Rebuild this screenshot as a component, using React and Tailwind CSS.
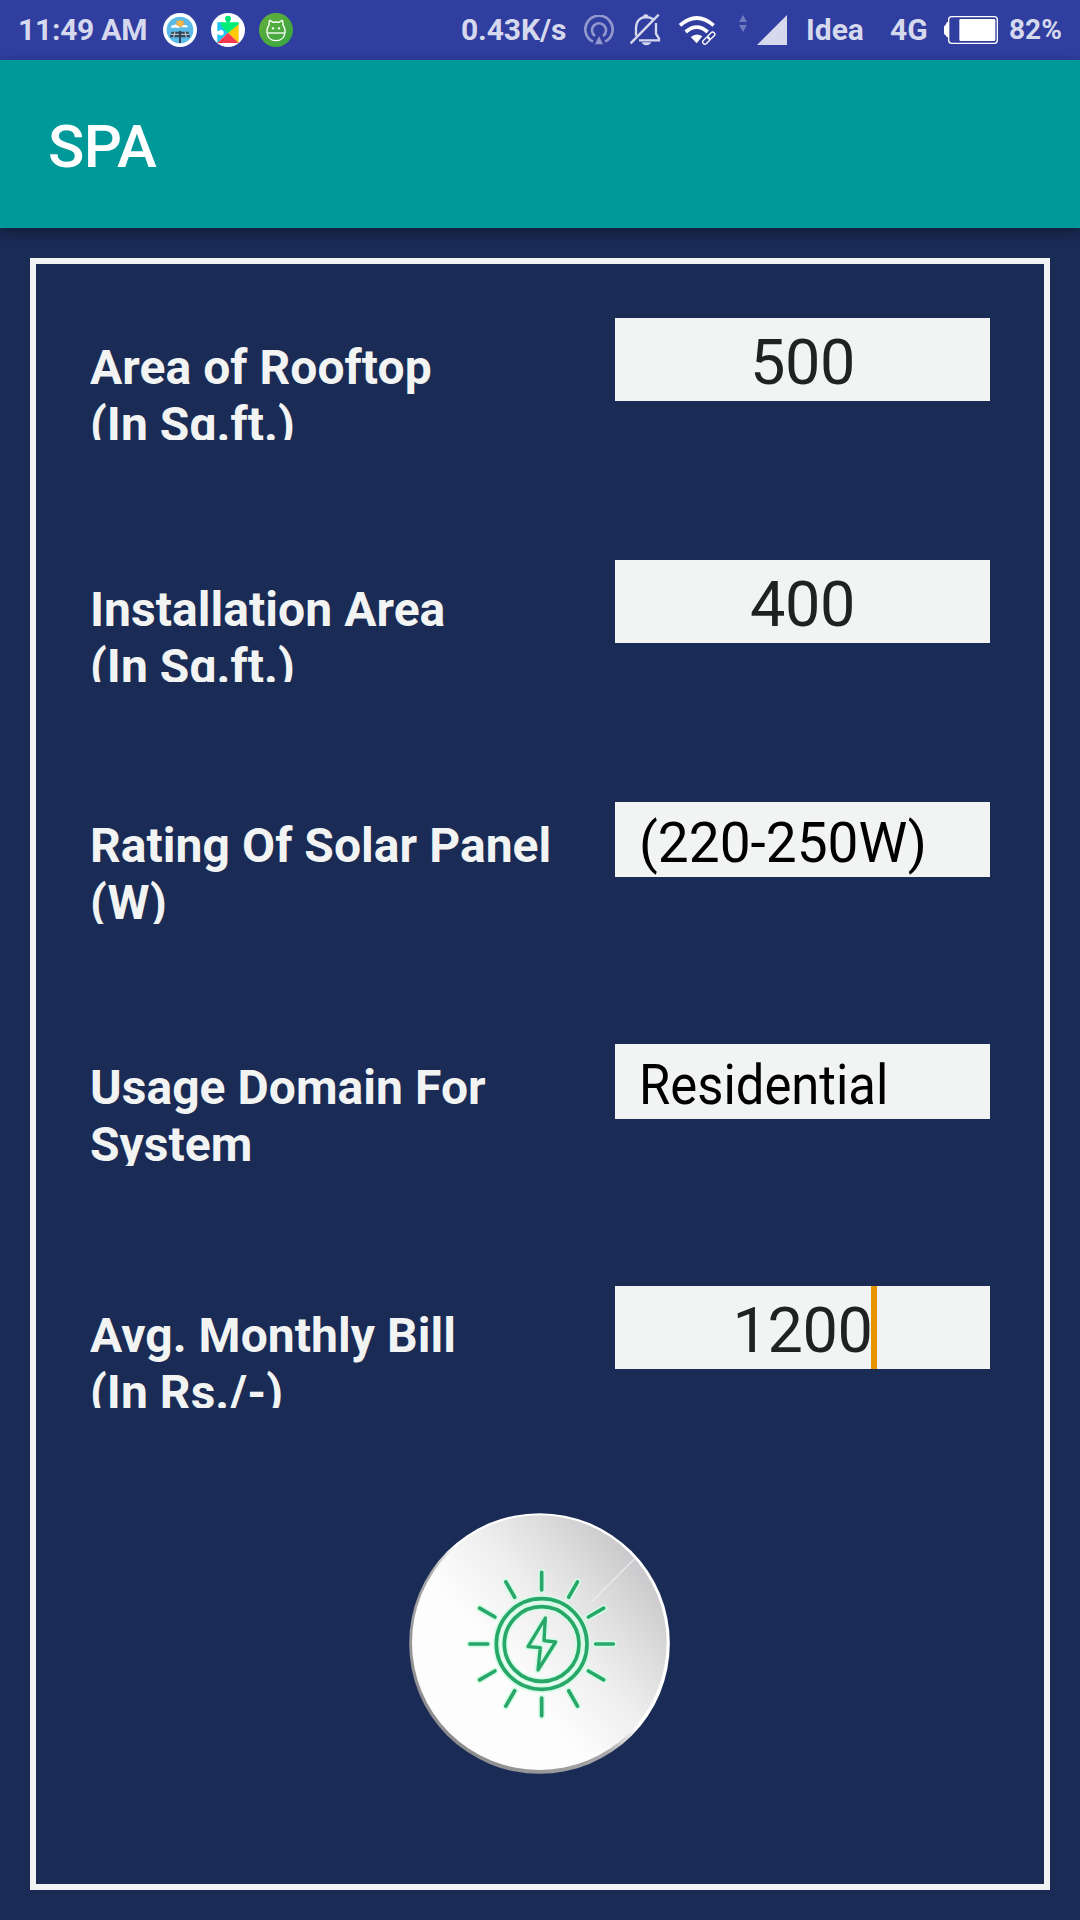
const FIELDS = [
  { lines: ["Area of Rooftop", "(In Sq.ft.)"], value: "500", kind: "input" },
  { lines: ["Installation Area", "(In Sq.ft.)"], value: "400", kind: "input" },
  { lines: ["Rating Of Solar Panel", "(W)"], value: "(220-250W)", kind: "select" },
  { lines: ["Usage Domain For", "System"], value: "Residential", kind: "select", narrow: true },
  { lines: ["Avg. Monthly Bill", "(In Rs./-)"], value: "1200", kind: "input", focused: true },
];

const RAYS = Array.from({ length: 12 }, (_, i) => i * 30);

function SolarAppIcon() {
  return (
    <svg className="h-[34px] w-[34px] shrink-0" viewBox="0 0 102 102">
      <circle cx="51" cy="51" r="51" fill="#fff" />
      <circle cx="51" cy="51" r="40" fill="#5bbbe6" />
      <path d="M51 20 L55 24 L62 22 L61 29 L66 33 L60 37 L58 43 L51 41 L44 43 L42 37 L37 33 L42 29 L40 22 L47 24Z" fill="#f5a63c" />
      <circle cx="51" cy="31" r="7" fill="#f9bd4f" />
      <path d="M24 43 Q24 36 32 37 Q38 31 44 38 Q50 38 51 44 H24Z" fill="#fff" />
      <path d="M55 43 Q57 36 64 37 Q72 33 75 43Z" fill="#fff" />
      <path d="M26 56 H76 L82 73 H20Z" fill="#34465a" />
      <path d="M23 64 H79 M36 56 L32 73 M66 56 L70 73" stroke="#c9d6dd" strokeWidth="3" />
      <path d="M51 54 V90" stroke="#2f4152" strokeWidth="6" />
    </svg>
  );
}

function PlayServicesIcon() {
  return (
    <svg className="h-[34px] w-[34px] shrink-0" viewBox="0 0 102 102">
      <circle cx="51" cy="51" r="51" fill="#fff" />
      <circle cx="51" cy="17" r="9" fill="#00e676" />
      <path d="M46 20 H56 V30 H46Z" fill="#00e676" />
      <path d="M19 28 H34 L51 59 L19 90Z" fill="#1fc4f4" />
      <path d="M83 28 V90 L51 59Z" fill="#ffca0a" />
      <path d="M30 28 H83 V34 L51 60 L30 38Z" fill="#00ee76" />
      <path d="M19 90 L51 59 L83 90Z" fill="#f8384f" />
      <circle cx="30" cy="59" r="8" fill="#fff" />
      <path d="M17 54 H30 V64 H17Z" fill="#fff" />
    </svg>
  );
}

function AndroidFaceIcon() {
  return (
    <svg className="h-[34px] w-[34px] shrink-0" viewBox="0 0 102 102">
      <defs>
        <linearGradient id="android-bg" x1="0" y1="0" x2="1" y2="1">
          <stop offset="0" stopColor="#64b03a" />
          <stop offset="1" stopColor="#36a541" />
        </linearGradient>
      </defs>
      <circle cx="51" cy="51" r="51" fill="url(#android-bg)" />
      <path d="M30 36 Q30 26 32 22 L43 28 Q51 26 59 28 L70 22 Q72 26 72 36 Q78 44 78 54 C78 74 66 83 51 83 C36 83 24 74 24 54 Q24 44 30 36Z" fill="none" stroke="#fff" strokeWidth="4" strokeLinejoin="round" />
      <path d="M25 60 H77" stroke="#fff" strokeWidth="4" />
      <circle cx="42" cy="46" r="3.5" fill="#fff" />
      <circle cx="60" cy="46" r="3.5" fill="#fff" />
    </svg>
  );
}

function HotspotIcon() {
  return (
    <svg className="h-[30px] w-[30px] shrink-0" viewBox="0 0 90 90" fill="none" stroke="#9297cd" strokeWidth="8">
      <path d="M27 80 A41 41 0 1 1 63 80" />
      <path d="M33 63 A21 21 0 1 1 57 63" />
      <path d="M45 63 L57 88 H33Z" fill="#9297cd" stroke="none" />
    </svg>
  );
}

function BellOffIcon() {
  return (
    <svg className="ml-4 h-[32px] w-[31px] shrink-0" viewBox="570 41 93 96" fill="none" stroke="#d6d9ee" strokeWidth="7">
      <path d="M588 106 V84 C588 64 599 51 618 50 C627 50 634 53 640 57" />
      <path d="M612 48 Q617 42 623 48" />
      <path d="M648 68 V100 L657 115 V120 H597" />
      <path d="M572 129 L656 43" />
      <path d="M605 126 H634 Q629 135 619 135 Q609 135 605 126Z" fill="#d6d9ee" stroke="none" />
    </svg>
  );
}

function WifiLinkIcon() {
  return (
    <svg className="ml-[18px] h-[31px] w-[37px] shrink-0" viewBox="718 45 111 93" fill="none" stroke="#fff">
      <path d="M721 76 Q771 32 822 76" strokeWidth="11" />
      <path d="M738 96 Q771 67 804 96" strokeWidth="11" />
      <path d="M753 111 Q771 97 788 109 L771 130Z" fill="#fff" stroke="none" />
      <g strokeWidth="4" transform="rotate(-45 807 114)">
        <rect x="783" y="108" width="26" height="13" rx="6.5" stroke="#303e9f" strokeWidth="11" />
        <rect x="805" y="108" width="26" height="13" rx="6.5" stroke="#303e9f" strokeWidth="11" />
        <rect x="784" y="108" width="25" height="13" rx="6.5" />
        <rect x="805" y="108" width="25" height="13" rx="6.5" />
      </g>
    </svg>
  );
}

function StatusBar() {
  return (
    <div className="flex h-[60px] items-center bg-[#303e9f] pl-[18px] text-[30px] leading-[60px] font-bold whitespace-nowrap text-[#d6d9ee]">
      <span className="w-[145px] shrink-0 tracking-[-0.25px]">11:49 AM</span>
      <div className="flex shrink-0 gap-[14px]">
        <SolarAppIcon />
        <PlayServicesIcon />
        <AndroidFaceIcon />
      </div>
      <span className="ml-[168px] w-[123px] shrink-0 tracking-[-0.1px]">0.43K/s</span>
      <HotspotIcon />
      <BellOffIcon />
      <WifiLinkIcon />
      <svg className="mb-[14px] ml-[23px] h-[17px] w-[8px] shrink-0" viewBox="0 0 24 51" fill="#737bc0">
        <path d="M12 0 L24 21 H0Z M0 30 H24 L12 51Z" />
      </svg>
      <svg className="ml-[10px] h-[30px] w-[30px] shrink-0" viewBox="0 0 30 30" fill="#d6d9ee">
        <path d="M30 0 V30 H0Z" />
      </svg>
      <span className="ml-[19px] w-[84px] shrink-0">Idea</span>
      <span className="w-[54px] shrink-0">4G</span>
      <svg className="h-[28px] w-[54px] shrink-0" viewBox="672 48 162 84">
        <path d="M686 66 H681 L677 74 Q672 76 672 82 V98 Q672 104 677 106 L681 112 H686Z" fill="#fff" />
        <rect x="686" y="50" width="146" height="80" rx="9" fill="none" stroke="#fff" strokeWidth="4" />
        <rect x="718" y="57" width="108" height="66" rx="4" fill="#fff" />
      </svg>
      <span className="ml-[11px] shrink-0 text-[28px]">82%</span>
    </div>
  );
}

function ValueBox({ field }) {
  if (field.kind === "select") {
    return (
      <div className="h-[75px] w-[375px] bg-[#f2f4f3] pl-6 text-[55px] leading-[82px] whitespace-nowrap text-black">
        <span className={field.narrow ? "inline-block origin-left scale-x-[0.923]" : "inline-block"}>{field.value}</span>
      </div>
    );
  }
  return (
    <div className="flex h-[83px] w-[375px] justify-center bg-[#f2f4f3] text-[63px] leading-[89px] tracking-[-0.4px] text-[#1f2220]">
      <span>{field.value}</span>
      {field.focused && <span className="-mr-[4px] -ml-[2px] h-[83px] w-[6px] shrink-0 bg-[#e69500]" />}
    </div>
  );
}

function FieldRow({ field }) {
  return (
    <div className="flex h-[122px] items-start justify-between overflow-hidden">
      <div className={field.kind === "select" ? "pt-[15px]" : "pt-[21px]"}>
        {field.lines.map((line) => (
          <div key={line} className="text-[48px] leading-[57px] font-bold tracking-[0.05px] whitespace-nowrap text-[#f2f4f3]">
            {line}
          </div>
        ))}
      </div>
      <ValueBox field={field} />
    </div>
  );
}

function SolarButton() {
  return (
    <svg className="h-[261px] w-[261px]" viewBox="27 39 783 783">
      <defs>
        <linearGradient id="disc" x1="0.92" y1="0.24" x2="0.42" y2="0.66">
          <stop offset="0" stopColor="#cbcbcd" />
          <stop offset="0.3" stopColor="#dededf" />
          <stop offset="0.6" stopColor="#efeff0" />
          <stop offset="1" stopColor="#fdfdfd" />
        </linearGradient>
        <linearGradient id="rim" x1="0.15" y1="0.85" x2="0.8" y2="0.2">
          <stop offset="0" stopColor="#8d8d90" />
          <stop offset="0.42" stopColor="#a9a9ab" />
          <stop offset="0.58" stopColor="#ffffff" />
          <stop offset="1" stopColor="#ffffff" />
        </linearGradient>
      </defs>
      <circle cx="418.5" cy="430.5" r="391" fill="url(#rim)" />
      <circle cx="418" cy="428" r="382" fill="url(#disc)" />
      <path d="M575 305 L702 178" stroke="#ececee" strokeWidth="4" />
      {[
        { color: "#d5fbe6", extra: 10 },
        { color: "#27a869", extra: 0 },
      ].map(({ color, extra }) => (
        <g key={color} fill="none" stroke={color} strokeLinecap="round" strokeLinejoin="round">
          <circle cx="425" cy="432" r="136" strokeWidth={11 + extra} />
          <circle cx="425" cy="432" r="112" strokeWidth={11 + extra} />
          {RAYS.map((angle) => (
            <path key={angle} d="M425 217 V270" strokeWidth={11 + extra} transform={`rotate(${angle} 425 432)`} />
          ))}
          <path d="M436 354 L384 440 L421 443 L414 510 L467 426 L432 422Z" strokeWidth={10 + extra} />
        </g>
      ))}
    </svg>
  );
}

export default function App() {
  return (
    <div className="flex h-[1920px] w-[1080px] flex-col overflow-hidden bg-[#1a2b55] font-['Roboto',sans-serif]">
      <StatusBar />
      <header className="h-[168px] shrink-0 bg-[#009999] pl-12 shadow-[0_4px_12px_rgba(0,0,0,0.4)]">
        <h1 className="text-[60px] leading-[173px] font-medium tracking-[-0.6px] text-white">SPA</h1>
      </header>
      <main className="mx-[30px] mt-[30px] flex h-[1632px] shrink-0 flex-col border-[6px] border-[#f2f4f3] px-[54px] pt-[54px]">
        <div className="flex flex-col gap-[120px]">
          {FIELDS.map((field) => (
            <FieldRow key={field.lines[0]} field={field} />
          ))}
        </div>
        <button type="button" className="mt-[105px] mr-px self-center rounded-full" aria-label="Calculate">
          <SolarButton />
        </button>
      </main>
    </div>
  );
}
